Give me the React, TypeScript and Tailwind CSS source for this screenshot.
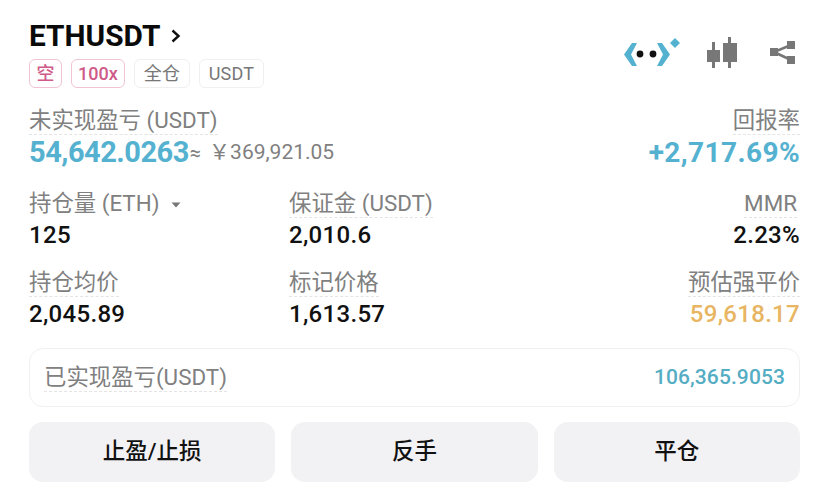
import React from 'react';

const font = { fontFamily: '"Roboto", "Noto Sans CJK SC", sans-serif' };

function Tag({ children, pink }: { children: React.ReactNode; pink?: boolean }) {
  return (
    <div className={`h-[29px] flex items-center rounded-[6px] border text-[18px] ${pink ? 'px-[6.5px] font-medium border-[#f0c4d5] text-[#cf5a88]' : 'px-[9px] tracking-[0.2px] border-[#f0f0f0] text-[#777777]'}`}>
      {children}
    </div>
  );
}

function Label({ children, dashed = true, className = '' }: { children: React.ReactNode; dashed?: boolean; className?: string }) {
  return (
    <div className={`h-[29px] leading-[28px] text-[22.4px] text-[#808080] w-fit ${dashed ? 'border-b border-dashed border-[#e4e4e4]' : ''} ${className}`}>
      {children}
    </div>
  );
}

function Stat({ label, value, right, color = 'text-[#111111]', dashed = true, labelClass }: { label: React.ReactNode; value: string; right?: boolean; color?: string; dashed?: boolean; labelClass?: string }) {
  return (
    <div className={`flex flex-col ${right ? 'items-end' : 'items-start'}`}>
      <Label dashed={dashed} className={labelClass}>{label}</Label>
      <div className={`h-[34px] leading-[34px] text-[24px] font-medium tracking-[0.3px] ${color}`}>{value}</div>
    </div>
  );
}

function ActionButton({ children }: { children: React.ReactNode }) {
  return (
    <button className="flex-1 h-[60px] rounded-[14px] bg-[#f2f2f4] text-[22.5px] font-medium text-[#111111]">
      {children}
    </button>
  );
}

export default function App() {
  return (
    <div className="w-[829px] h-[495px] bg-white px-[29px] pt-[20px] overflow-hidden" style={font}>
      <div className="flex justify-between">
        <div>
          <div className="flex items-center h-[32px]">
            <span className="text-[29.8px] font-bold text-[#0a0a0a] leading-[32px]">ETHUSDT</span>
            <svg width="12" height="16" viewBox="0 0 12 16" className="ml-[10px]">
              <path d="M2.5 2.5 L8.5 8 L2.5 13.5" fill="none" stroke="#111" strokeWidth="2.4" />
            </svg>
          </div>
          <div className="flex gap-[8.5px] mt-[7px]">
            <Tag pink>空</Tag>
            <Tag pink>100x</Tag>
            <Tag>全仓</Tag>
            <Tag>USDT</Tag>
          </div>
        </div>
        <div className="flex items-start pt-[17px] pr-[5px]">
          <svg width="57" height="32" viewBox="0 0 57 32">
            <path d="M8 6 L0 17.5 L8 29 L13 29 L7 17.5 L13 6 Z" fill="#55b1d0" />
            <circle cx="16" cy="17" r="3.4" fill="#111" />
            <circle cx="29" cy="17" r="3.4" fill="#111" />
            <path d="M33 6 L39 17.5 L33 29 L38 29 L46 17.5 L38 6 Z" fill="#55b1d0" />
            <path d="M51 1 L56 6 L51 11 L46 6 Z" fill="#55b1d0" />
          </svg>
          <svg width="30" height="32" viewBox="0 0 30 32" className="ml-[26px]">
            <g fill="#777777">
              <rect x="5" y="5" width="3" height="26" />
              <rect x="0" y="13" width="13" height="12" />
              <rect x="21" y="0" width="3" height="31" />
              <rect x="16" y="6" width="14" height="19" />
            </g>
          </svg>
          <svg width="25" height="32" viewBox="0 0 25 32" className="ml-[33px]">
            <g fill="#777777">
              <rect x="17" y="4" width="8" height="8" />
              <rect x="0" y="11" width="8" height="8" />
              <rect x="17" y="19" width="8" height="8" />
            </g>
            <path d="M21 8 L4 15 L21 23" fill="none" stroke="#777777" strokeWidth="2.6" />
          </svg>
        </div>
      </div>

      <div className="flex justify-between mt-[18px]">
        <div>
          <Label>未实现盈亏 (USDT)</Label>
          <div className="flex items-center h-[36px]">
            <span className="text-[29px] font-bold text-[#55b1d0] tracking-[-0.5px]">54,642.0263</span>
            <span className="text-[20px] text-[#808080] ml-[1px]">≈</span>
            <span className="text-[21px] text-[#808080] ml-[8px]">￥369,921.05</span>
          </div>
        </div>
        <div className="flex flex-col items-end">
          <Label>回报率</Label>
          <div className="h-[36px] leading-[36px] text-[28px] font-bold text-[#55b1d0] tracking-[0.4px]">+2,717.69%</div>
        </div>
      </div>

      <div className="grid grid-cols-[260px_1fr_auto] mt-[18px]">
        <Stat
          dashed={false}
          label={
            <span className="flex items-center">
              持仓量 (ETH)
              <svg width="10" height="6" viewBox="0 0 10 6" className="ml-[12px] mt-[3px]">
                <path d="M0.5 0.5 H9.5 L5 5.5 Z" fill="#777777" />
              </svg>
            </span>
          }
          value="125"
        />
        <Stat label="保证金 (USDT)" value="2,010.6" />
        <Stat label="MMR" value="2.23%" right labelClass="mr-[3px]" />
      </div>

      <div className="grid grid-cols-[260px_1fr_auto] mt-[16px]">
        <Stat label="持仓均价" value="2,045.89" />
        <Stat label="标记价格" value="1,613.57" />
        <Stat label="预估强平价" value="59,618.17" right color="text-[#e8b562]" />
      </div>

      <div className="h-[59px] mt-[17px] rounded-[14px] border border-[#f0f0f0] px-[14px] flex items-center justify-between">
        <Label>已实现盈亏(USDT)</Label>
        <span className="text-[21px] font-medium text-[#55adc4] tracking-[0.1px]">106,365.9053</span>
      </div>

      <div className="flex gap-[16px] mt-[15px]">
        <ActionButton>止盈/止损</ActionButton>
        <ActionButton>反手</ActionButton>
        <ActionButton>平仓</ActionButton>
      </div>
    </div>
  );
}
